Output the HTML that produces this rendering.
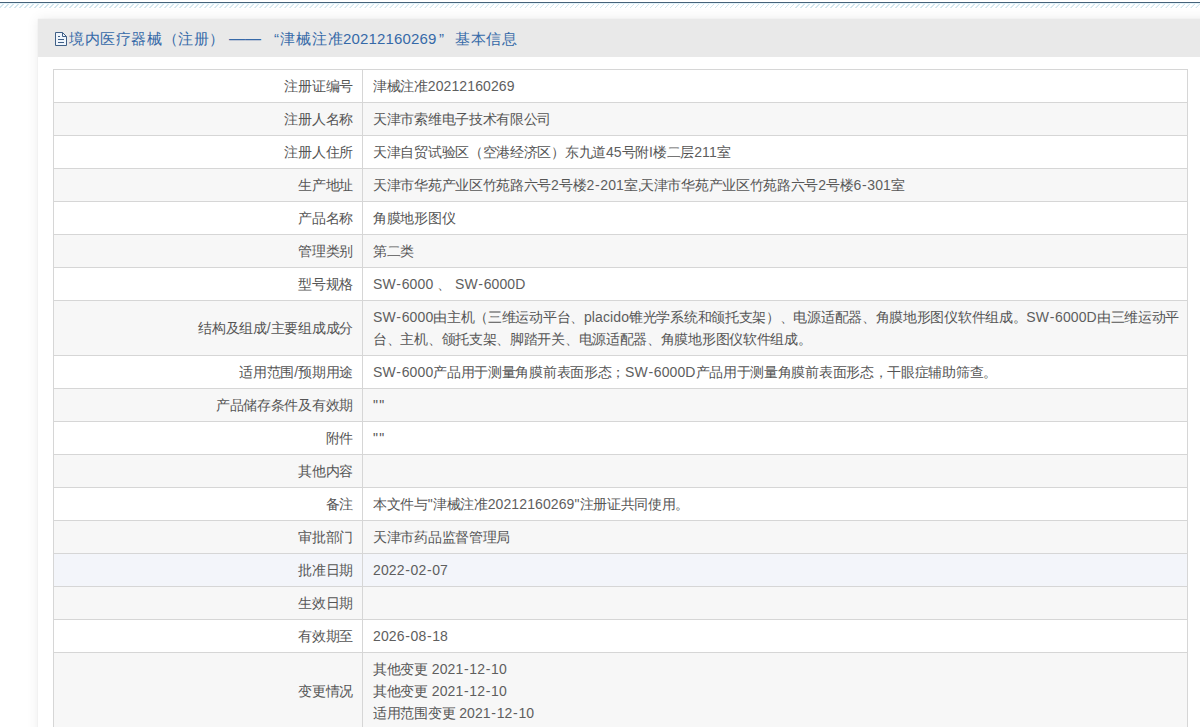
<!DOCTYPE html>
<html><head><meta charset="utf-8">
<style>
html,body{margin:0;padding:0;background:#fff;}
body{width:1200px;height:727px;overflow:hidden;position:relative;font-family:"Liberation Sans",sans-serif;}
.topline{position:absolute;left:0;top:2px;width:1200px;height:1px;background:#456279;}
.hatch{position:absolute;left:0;top:3px;width:1200px;height:5px;background:repeating-linear-gradient(135deg,#fff 0,#fff 2.3px,#d3e6ee 2.75px,#d3e6ee 3.54px);}
.tint{position:absolute;left:0;top:3px;width:1200px;height:1px;background:#e4f4fb;}
.panel{position:absolute;left:38px;top:19px;width:1180px;height:760px;background:#fff;
 box-shadow:0 0 12px rgba(0,0,0,0.08),0 0 1px rgba(0,0,0,0.1);}
.hdr{position:absolute;left:0;top:0;width:100%;height:38px;background:#e9e9e9;}
.title span{position:absolute;top:0;}
.title{position:absolute;left:0;top:10px;font-size:15px;line-height:20px;color:#3669a8;white-space:nowrap;letter-spacing:0.6px;}
.icon{position:absolute;left:16px;top:12px;}
.ql,.qr{display:inline-block;width:16px;}.ql{text-align:right;}.qr{text-align:left;}
table{position:absolute;left:15px;top:50px;width:1135px;border-collapse:collapse;font-size:13.5px;color:#555;letter-spacing:-0.3px;}
td{border:1px solid #d6d6d6;padding:6px 9px 4px;line-height:22px;vertical-align:middle;}
td i{font-style:normal;letter-spacing:0.1px;font-size:14px;line-height:0;color:#5e5e5e;}
td u{text-decoration:none;margin:0 0.6px;}
td i.q{letter-spacing:1.2px;color:#555;}
td s{text-decoration:none;letter-spacing:-1.5px;}
td.l{width:289px;text-align:right;padding-right:9px;padding-left:10px;}
td.v{padding-right:3px;padding-left:10px;}
tr:nth-child(even) td{background:#f7f7f7;}
tr.hov td{background:#f3f5fa;}
</style></head><body>
<div class="topline"></div>
<div class="hatch"></div>
<div class="tint"></div>
<div class="panel">
 <div class="hdr">
  <svg class="icon" width="14" height="16" viewBox="0 0 14 16"><path d="M1.5 1.5H8.5L12.5 5.5V14.5H1.5Z" fill="#eef4fb" stroke="#3f5f86" stroke-width="1"/><path d="M8.5 1.5V5.5H12.5" fill="none" stroke="#3f5f86" stroke-width="1"/><path d="M4 5.5H6M4 8.5H10M4 11.5H10" stroke="#3f5f86" stroke-width="1"/></svg>
  <div class="title"><span style="left:31px">境内医疗器械（注册）</span><span style="left:191px;letter-spacing:0;font-size:16px">——</span><span style="left:236px;letter-spacing:1.1px">“津械注准</span><span style="left:305px;letter-spacing:0.15px">20212160269</span><span style="left:401px">”</span><span style="left:417px">基本信息</span></div>
 </div>
 <table>
  <tr><td class="l">注册证编号</td><td class="v">津械注准<i>20212160269</i></td></tr>
  <tr><td class="l">注册人名称</td><td class="v">天津市索维电子技术有限公司</td></tr>
  <tr><td class="l">注册人住所</td><td class="v">天津自贸试验区（空港经济区）东九道<i>45</i>号附<i>I</i>楼二层<i>211</i>室</td></tr>
  <tr><td class="l">生产地址</td><td class="v">天津市华苑产业区竹苑路六号<i>2</i>号楼<i>2<u>-</u>201</i>室<i><s>,</s></i>天津市华苑产业区竹苑路六号<i>2</i>号楼<i>6<u>-</u>301</i>室</td></tr>
  <tr><td class="l">产品名称</td><td class="v">角膜地形图仪</td></tr>
  <tr><td class="l">管理类别</td><td class="v">第二类</td></tr>
  <tr><td class="l">型号规格</td><td class="v"><i>SW<u>-</u>6000 </i>、<i> SW<u>-</u>6000D</i></td></tr>
  <tr><td class="l">结构及组成<i>/</i>主要组成成分</td><td class="v"><i>SW<u>-</u>6000</i>由主机（三维运动平台、<i>placido</i>锥光学系统和颌托支架）、电源适配器、角膜地形图仪软件组成。<i>SW<u>-</u>6000D</i>由三维运动平台、主机、颌托支架、脚踏开关、电源适配器、角膜地形图仪软件组成。</td></tr>
  <tr><td class="l">适用范围<i>/</i>预期用途</td><td class="v"><i>SW<u>-</u>6000</i>产品用于测量角膜前表面形态；<i>SW<u>-</u>6000D</i>产品用于测量角膜前表面形态，干眼症辅助筛查。</td></tr>
  <tr><td class="l">产品储存条件及有效期</td><td class="v"><i class="q">""</i></td></tr>
  <tr><td class="l">附件</td><td class="v"><i class="q">""</i></td></tr>
  <tr><td class="l">其他内容</td><td class="v"></td></tr>
  <tr><td class="l">备注</td><td class="v">本文件与<i>"</i>津械注准<i>20212160269"</i>注册证共同使用。</td></tr>
  <tr><td class="l">审批部门</td><td class="v">天津市药品监督管理局</td></tr>
  <tr class="hov"><td class="l">批准日期</td><td class="v"><i>2022<u>-</u>02<u>-</u>07</i></td></tr>
  <tr><td class="l">生效日期</td><td class="v"></td></tr>
  <tr><td class="l">有效期至</td><td class="v"><i>2026<u>-</u>08<u>-</u>18</i></td></tr>
  <tr><td class="l">变更情况</td><td class="v">其他变更<i> 2021<u>-</u>12<u>-</u>10</i><br>其他变更<i> 2021<u>-</u>12<u>-</u>10</i><br>适用范围变更<i> 2021<u>-</u>12<u>-</u>10</i></td></tr>
 </table>
</div>
</body></html>
